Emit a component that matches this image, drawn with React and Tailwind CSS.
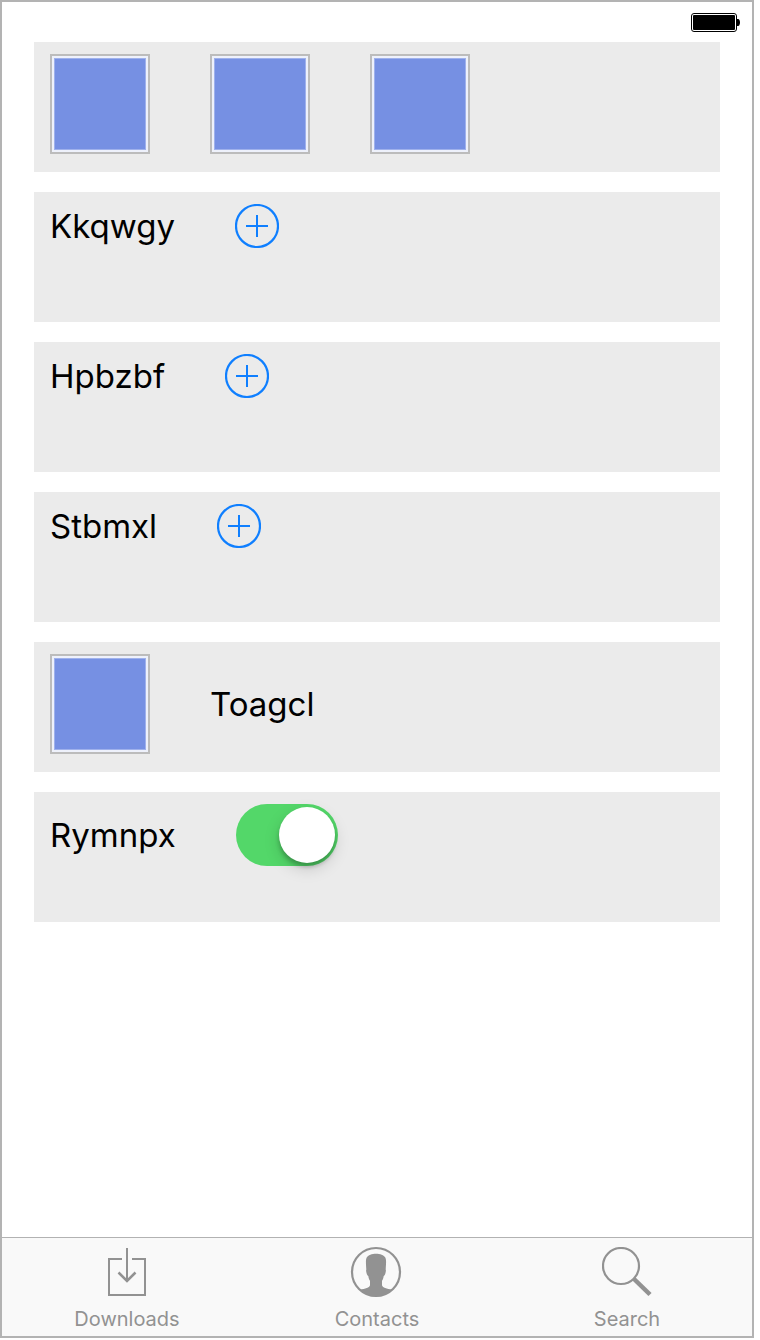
import { useState } from "react";

function Battery() {
  return (
    <svg role="img" aria-label="Battery full" className="h-5 w-[50px]" viewBox="0 0 50 20" fill="none">
      <rect x="0.5" y="0.5" width="45" height="18" rx="2.5" stroke="#000" />
      <rect x="2" y="2" width="42" height="15" rx="1" fill="#000" />
      <path d="M46 6h1.2c1 0 1.8 1.6 1.8 3.5s-.8 3.5-1.8 3.5H46z" fill="#000" />
    </svg>
  );
}

function Card({ children }) {
  return (
    <section className="flex h-[130px] items-start gap-[60px] bg-[#ebebeb] px-4 py-3">
      {children}
    </section>
  );
}

function Swatch() {
  return (
    <div className="size-[100px] shrink-0 border-2 border-[#bcbcbc] bg-[#eef1fb] p-0.5">
      <div className="size-full border border-[#9fb1ec] bg-[#7690e3]" />
    </div>
  );
}

function AddRow({ label }) {
  return (
    <Card>
      <span className="text-[33px] leading-11">{label}</span>
      <button type="button" aria-label={`Add ${label}`} className="size-11 text-[#0f7fff]">
        <svg viewBox="0 0 44 44" className="size-11" fill="none" stroke="currentColor" strokeWidth="2">
          <circle cx="22" cy="22" r="21" strokeWidth="2.2" />
          <path d="M11 22h22M22 11v22" />
        </svg>
      </button>
    </Card>
  );
}

function DownloadsIcon() {
  return (
    <svg viewBox="0 0 50 50" className="size-[50px]" fill="none" stroke="currentColor" strokeWidth="2">
      <path d="M20 12H7v36h36V12H30" />
      <path d="M25 1v33" />
      <path d="M16.5 25.5 25 34l8.5-8.5" strokeWidth="2.5" />
    </svg>
  );
}

function ContactsIcon() {
  return (
    <svg viewBox="1 0 50 50" className="size-[50px] overflow-visible" fill="none">
      <circle cx="25" cy="25" r="24" stroke="currentColor" strokeWidth="2.2" />
      <path
        fill="currentColor"
        d="M25 6.8C21 6.8 17 8.3 15.7 10.5 14.6 12.800 14.900 16 15.300 22.500 14.900 23.200 15.100 25 15.800 27 16.200 28.200 16.700 28.700 17.300 28.900 17.600 31 18.200 32.500 19 33.800V38.200C18.800 40.600 14 41.400 9 42.800 13.500 47.200 19 49.500 25 49.500S36.500 47.200 41 42.800C36 41.400 31.200 40.600 31 38.200V33.800C31.800 32.500 32.400 31 32.700 28.900 33.300 28.700 33.800 28.200 34.200 27 34.900 25 35.100 23.200 34.700 22.500 35.100 16 35.400 12.800 34.300 10.500 33 8.300 29 6.800 25 6.800z"
      />
    </svg>
  );
}

function SearchIcon() {
  return (
    <svg viewBox="0 0 50 50" className="size-[50px]" fill="none" stroke="currentColor">
      <circle cx="19" cy="19" r="18" strokeWidth="2.2" />
      <path d="M31.5 31.5 48 47.5" strokeWidth="4.5" />
    </svg>
  );
}

const tabs = [
  { label: "Downloads", Icon: DownloadsIcon },
  { label: "Contacts", Icon: ContactsIcon },
  { label: "Search", Icon: SearchIcon },
];

export default function App() {
  const [on, setOn] = useState(true);

  return (
    <div className="flex min-h-screen bg-white pr-1.5 pb-0.5 font-['Inter','Liberation_Sans',sans-serif] text-black">
      <div className="flex flex-1 flex-col border-2 border-[#b3b3b3]">
        <header className="flex h-10 justify-end pt-[11px] pr-[11px]">
          <Battery />
        </header>

        <main className="flex flex-1 flex-col gap-5 px-8 pb-5">
          <Card>
            <Swatch />
            <Swatch />
            <Swatch />
          </Card>
          <AddRow label="Kkqwgy" />
          <AddRow label="Hpbzbf" />
          <AddRow label="Stbmxl" />
          <Card>
            <Swatch />
            <span className="text-[33px] leading-[100px]">Toagcl</span>
          </Card>
          <Card>
            <label htmlFor="rymnpx" className="text-[33px] leading-[62px]">
              Rymnpx
            </label>
            <input
              id="rymnpx"
              type="checkbox"
              role="switch"
              checked={on}
              onChange={(e) => setOn(e.target.checked)}
              className="flex h-[62px] w-[102px] appearance-none items-center rounded-full bg-[#d1d1d6] p-[3px] before:size-14 before:rounded-full before:bg-white before:shadow-[0_6px_16px_rgba(0,0,0,0.15),0_4px_4px_rgba(0,0,0,0.22)] before:content-[''] checked:justify-end checked:bg-[#53d769]"
            />
          </Card>
        </main>

        <nav className="grid grid-cols-3 border-t border-[#b2b2b2] bg-[#f9f9f9] text-[#929292]">
          {tabs.map(({ label, Icon }) => (
            <button key={label} type="button" className="flex flex-col items-center pt-[9px] pb-[5px]">
              <Icon />
              <span className="mt-2.5 text-xl leading-6">{label}</span>
            </button>
          ))}
        </nav>
      </div>
    </div>
  );
}
